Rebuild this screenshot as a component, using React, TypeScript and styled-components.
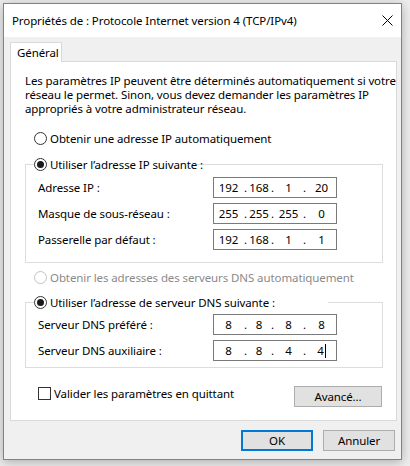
import React from 'react'
import styled, { createGlobalStyle } from 'styled-components'

const GlobalStyle = createGlobalStyle`
  html, body {
    margin: 0;
    background: #ededed;
  }
  body {
    font-family: "Noto Sans", "Liberation Sans", sans-serif;
    font-size: 11.5px;
    letter-spacing: -0.1px;
    color: #000;
  }
`

type RadioProps = { checked?: boolean; disabled?: boolean; label: string }

const Radio = ({ checked, disabled, label }: RadioProps) => (
  <RadioRow $disabled={disabled}>
    <RadioCircle $disabled={disabled}>{checked && <RadioDot />}</RadioCircle>
    {label}
  </RadioRow>
)

type IpProps = { parts: string[]; caret?: boolean }

const IpField = ({ parts, caret }: IpProps) => (
  <IpBox>
    {parts.map((part, i) => (
      <React.Fragment key={i}>
        {i > 0 && <Dot>.</Dot>}
        <Octet>
          {part}
          {caret && i === parts.length - 1 && <Caret />}
        </Octet>
      </React.Fragment>
    ))}
  </IpBox>
)

const ipRows = [
  { label: 'Adresse IP :', parts: ['192', '168', '1', '20'] },
  { label: 'Masque de sous-réseau :', parts: ['255', '255', '255', '0'] },
  { label: 'Passerelle par défaut :', parts: ['192', '168', '1', '1'] },
]

const dnsRows = [
  { label: 'Serveur DNS préféré :', parts: ['8', '8', '8', '8'] },
  { label: 'Serveur DNS auxiliaire :', parts: ['8', '8', '4', '4'], caret: true },
]

const App = () => {
  return (
    <Desktop>
      <GlobalStyle />
      <Window>
        <TitleBar>
          <Title>Propriétés de : Protocole Internet version 4 (TCP/IPv4)</Title>
          <CloseButton>
            <svg width="11" height="11" viewBox="0 0 11 11">
              <path d="M0.5 0.5 L10.5 10.5 M10.5 0.5 L0.5 10.5" stroke="#000" strokeWidth="1" />
            </svg>
          </CloseButton>
        </TitleBar>
        <Body>
          <Tabs>
            <Tab>Général</Tab>
          </Tabs>
          <Panel>
            <Intro>
              Les paramètres IP peuvent être déterminés automatiquement si votre
              <br />
              réseau le permet. Sinon, vous devez demander les paramètres IP
              <br />
              appropriés à votre administrateur réseau.
            </Intro>
            <StandaloneRadio>
              <Radio label="Obtenir une adresse IP automatiquement" />
            </StandaloneRadio>
            <Group $top={10} $bottom={12}>
              <GroupLegend $width={163}>
                <Radio checked label="Utiliser l’adresse IP suivante :" />
              </GroupLegend>
              <FieldRows $top={5}>
                {ipRows.map(row => (
                  <FieldRow key={row.label}>
                    <FieldLabel>{row.label}</FieldLabel>
                    <IpField parts={row.parts} />
                  </FieldRow>
                ))}
              </FieldRows>
            </Group>
            <StandaloneRadio $top={6}>
              <Radio disabled label="Obtenir les adresses des serveurs DNS automatiquement" />
            </StandaloneRadio>
            <Group $top={9} $bottom={6}>
              <GroupLegend $width={294}>
                <Radio checked label="Utiliser l’adresse de serveur DNS suivante :" />
              </GroupLegend>
              <FieldRows $top={4}>
                {dnsRows.map(row => (
                  <FieldRow key={row.label}>
                    <FieldLabel>{row.label}</FieldLabel>
                    <IpField parts={row.parts} caret={row.caret} />
                  </FieldRow>
                ))}
              </FieldRows>
            </Group>
            <PanelFooter>
              <CheckRow>
                <CheckBox />
                Valider les paramètres en quittant
              </CheckRow>
              <Button $width={88}>Avancé...</Button>
            </PanelFooter>
          </Panel>
          <DialogButtons>
            <Button $width={72} $default>
              OK
            </Button>
            <Button $width={72}>Annuler</Button>
          </DialogButtons>
        </Body>
      </Window>
    </Desktop>
  )
}

export default App

const Desktop = styled.div`
  padding: 3px 8px 7px 3px;
  min-height: 466px;
  box-sizing: border-box;
`

const Window = styled.div`
  width: 399px;
  box-sizing: border-box;
  border: 1px solid #4a8fd0;
  background: #f0f0f0;
  box-shadow: 0 2px 10px rgba(0, 0, 0, 0.28);
`

const TitleBar = styled.div`
  display: flex;
  align-items: center;
  justify-content: space-between;
  height: 33px;
  background: #fff;
  padding: 0 8px 0 8px;
`

const Title = styled.div`
  white-space: nowrap;
`

const CloseButton = styled.div`
  display: flex;
  align-items: center;
`

const Body = styled.div`
  padding: 5px 4px 8px 6px;
`

const Tabs = styled.div`
  display: flex;
`

const Tab = styled.div`
  width: 52px;
  height: 20px;
  box-sizing: border-box;
  border: 1px solid #d9d9d9;
  border-bottom: none;
  background: #fff;
  padding-left: 6px;
  line-height: 19px;
  margin-bottom: -1px;
  position: relative;
  z-index: 1;
`

const Panel = styled.div`
  width: 387px;
  box-sizing: border-box;
  border: 1px solid #d9d9d9;
  background: #fff;
  padding: 12px 13px 13px 14px;
`

const Intro = styled.p`
  margin: 0;
  line-height: 14px;
  white-space: nowrap;
`

const StandaloneRadio = styled.div<{ $top?: number }>`
  margin-top: ${p => p.$top ?? 14}px;
  padding-left: 9px;
`

const RadioRow = styled.div<{ $disabled?: boolean }>`
  display: flex;
  align-items: center;
  gap: 3px;
  height: 16px;
  white-space: nowrap;
  color: ${p => (p.$disabled ? '#8a8a8a' : '#000')};
`

const RadioCircle = styled.span<{ $disabled?: boolean }>`
  width: 13px;
  height: 13px;
  box-sizing: border-box;
  border-radius: 50%;
  border: 1px solid ${p => (p.$disabled ? '#c4c4c4' : '#333')};
  background: #fff;
  display: flex;
  align-items: center;
  justify-content: center;
  flex-shrink: 0;
`

const RadioDot = styled.span`
  width: 7px;
  height: 7px;
  border-radius: 50%;
  background: #1a1a1a;
`

const Group = styled.fieldset<{ $top: number; $bottom: number }>`
  margin: ${p => p.$top}px 0 0 0;
  padding: 0 0 ${p => p.$bottom}px 0;
  border: 1px solid #dcdcdc;
  min-width: 0;
`

const GroupLegend = styled.legend<{ $width: number }>`
  width: ${p => p.$width}px;
  box-sizing: border-box;
  margin-left: 8px;
  padding: 0;
`

const FieldRows = styled.div<{ $top: number }>`
  display: grid;
  gap: 5px;
  padding: ${p => p.$top}px 0 0 12px;
`

const FieldRow = styled.div`
  display: grid;
  grid-template-columns: 175px 124px;
  align-items: center;
`

const FieldLabel = styled.span`
  white-space: nowrap;
`

const IpBox = styled.div`
  display: grid;
  grid-template-columns: 29px 5px 22px 5px 27px 5px 29px;
  align-items: center;
  height: 21px;
  box-sizing: border-box;
  border: 1px solid #7a7a7a;
  background: #fff;
`

const Octet = styled.span`
  text-align: center;
  white-space: nowrap;
`

const Dot = styled.span`
  text-align: center;
`

const Caret = styled.span`
  display: inline-block;
  width: 1px;
  height: 14px;
  background: #000;
  margin-left: 1px;
  vertical-align: -3px;
`

const PanelFooter = styled.div`
  display: flex;
  align-items: flex-start;
  justify-content: space-between;
  margin-top: 18px;
  padding-left: 13px;
  padding-right: 1px;
`

const CheckRow = styled.div`
  display: flex;
  align-items: center;
  gap: 3px;
  height: 14px;
`

const CheckBox = styled.span`
  width: 13px;
  height: 13px;
  box-sizing: border-box;
  border: 1px solid #333;
  background: #fff;
`

const DialogButtons = styled.div`
  display: flex;
  justify-content: flex-end;
  gap: 10px;
  margin-top: 9px;
  padding-right: 2px;
`

const Button = styled.div<{ $width: number; $default?: boolean }>`
  width: ${p => p.$width}px;
  height: 21px;
  box-sizing: border-box;
  display: flex;
  align-items: center;
  justify-content: center;
  background: #e1e1e1;
  border: 1px solid ${p => (p.$default ? '#0078d7' : '#adadad')};
  box-shadow: ${p => (p.$default ? 'inset 0 0 0 1px #0078d7' : 'none')};
`
